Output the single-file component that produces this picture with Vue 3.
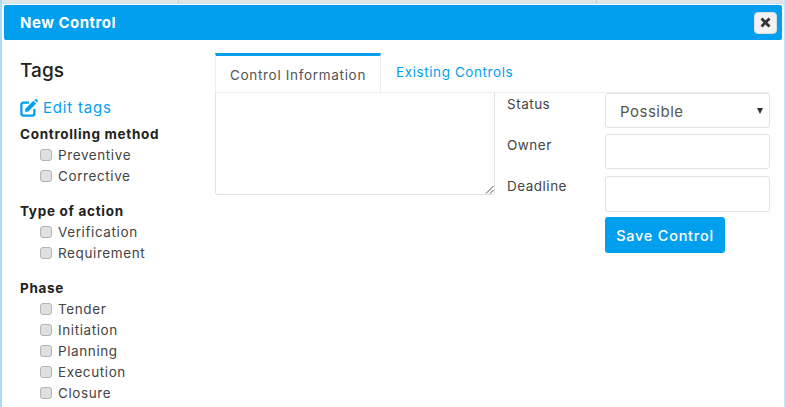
<script setup>
const groups = [
  { title: "Controlling method", items: ["Preventive", "Corrective"] },
  { title: "Type of action", items: ["Verification", "Requirement"] },
  { title: "Phase", items: ["Tender", "Initiation", "Planning", "Execution", "Closure"] },
];
</script>

<template>
  <div class="modal">
    <header class="modal_header">
      <h4>New Control</h4>
      <button class="close_btn">
        <svg width="11" height="11" viewBox="0 0 11 11"><path d="M1.5 1.5l8 8M9.5 1.5l-8 8" stroke="#333" stroke-width="2.8" /></svg>
      </button>
    </header>

    <div class="modal_body">
      <aside class="tags">
        <h3>Tags</h3>
        <a class="edit_link">
          <svg width="18" height="18" viewBox="0 0 18 18" fill="none">
            <path d="M9 3.6H3.4A2 2 0 0 0 1.4 5.6v9a2 2 0 0 0 2 2h9a2 2 0 0 0 2-2V10" stroke="#039fef" stroke-width="2.3" />
            <path d="M5.6 9.6 13.4 1.8l2.8 2.8-7.8 7.8-3.4.6z" fill="#039fef" />
            <path d="M14.4 1 15.2.3a1 1 0 0 1 1.4 0l1.1 1.1a1 1 0 0 1 0 1.4l-.8.8z" fill="#039fef" />
          </svg>
          Edit tags
        </a>
        <div v-for="group in groups" :key="group.title" class="group">
          <div class="group_title">{{ group.title }}</div>
          <label v-for="item in group.items" :key="item" class="check_row">
            <span class="check"></span>{{ item }}
          </label>
        </div>
      </aside>

      <main class="content">
        <nav class="tabs">
          <div class="tab active">Control Information</div>
          <div class="tab">Existing Controls</div>
        </nav>
        <div class="panel">
          <div class="textarea">
            <svg class="grip" width="9" height="9" viewBox="0 0 9 9"><path d="M1 8.5 8.5 1M5 8.5 8.5 5" stroke="#555" stroke-width="1" /></svg>
          </div>
          <div class="form">
            <div class="field">
              <label>Status</label>
              <div class="input select">Possible<span class="caret"></span></div>
            </div>
            <div class="field owner">
              <label>Owner</label>
              <div class="input"></div>
            </div>
            <div class="field last">
              <label>Deadline</label>
              <div class="input"></div>
            </div>
            <button class="save_btn">Save Control</button>
          </div>
        </div>
      </main>
    </div>
  </div>
</template>

<style>
html, body {
  margin: 0;
  background: #fff;
  overflow: hidden;
}
</style>

<style scoped>
.modal {
  height: 407px;
  box-sizing: border-box;
  padding-top: 3px;
  overflow: hidden;
  background:
    linear-gradient(#c9c9c9, #c9c9c9) 176px 0 / 1px 3px no-repeat,
    linear-gradient(#c9c9c9, #c9c9c9) 594px 0 / 1px 3px no-repeat,
    linear-gradient(#e4e4e4 3px, #bfe6fb 3px, #bfe6fb 4px, #fff 4px);
  font-family: Inter, "Open Sans", sans-serif;
  color: #333;
  border-left: 2px solid #a9dcf8;
  border-right: 1px solid #bfe6fb;
}

.modal_header {
  display: flex;
  justify-content: space-between;
  align-items: center;
  height: 35px;
  margin: 2px 2px 0 2px;
  padding: 0 5px 0 16px;
  background: #039fef;
  border-radius: 2px;
}

h4 {
  margin: 0;
  font-size: 15px;
  font-weight: 700;
  letter-spacing: .5px;
  color: #fff;
}

.close_btn {
  display: flex;
  align-items: center;
  justify-content: center;
  width: 23px;
  height: 22px;
  padding: 0;
  background: #f2f2f2;
  border: 1px solid #ddd;
  border-radius: 4px;
}

.modal_body {
  display: flex;
  padding-top: 13px;
}

.tags {
  width: 195px;
  padding-left: 18px;
  flex-shrink: 0;
}

h3 {
  margin: 6px 0 15px;
  font-size: 19px;
  line-height: 24px;
  font-weight: 500;
  letter-spacing: .1px;
  color: #222;
}

.edit_link {
  display: flex;
  align-items: center;
  gap: 5px;
  font-size: 15px;
  line-height: 20px;
  letter-spacing: .8px;
  color: #039fef;
}

.group {
  margin-bottom: 15px;
}

.edit_link + .group {
  margin-top: 6px;
}

.group_title {
  font-size: 13.5px;
  line-height: 20px;
  font-weight: 700;
  letter-spacing: .7px;
  color: #222;
}

.check_row {
  display: flex;
  align-items: center;
  height: 21px;
  padding-left: 20px;
  font-size: 13.5px;
  letter-spacing: .6px;
  color: #444;
}

.check {
  width: 10px;
  height: 10px;
  margin-right: 6px;
  background: #e0e0e0;
  border: 1px solid #b4b4b4;
  border-radius: 3px;
}

.content {
  width: 555px;
}

.tabs {
  display: flex;
  height: 39px;
  border-bottom: 1px solid #eee;
}

.tab {
  padding: 0 15px;
  font-size: 13.5px;
  line-height: 38px;
  letter-spacing: .58px;
  color: #039fef;
}

.tab.active {
  padding: 0 14px;
  letter-spacing: .68px;
  color: #555;
  border-top: 3px solid #039fef;
  border-right: 1px solid #eee;
  border-left: 1px solid #eee;
}

.panel {
  display: flex;
}

.textarea {
  position: relative;
  box-sizing: border-box;
  width: 280px;
  height: 102px;
  background: #fff;
  border: 1px solid #dfe3e8;
  border-top: 0;
  border-radius: 0 0 3px 3px;
}

.grip {
  position: absolute;
  right: 0;
  bottom: 0;
}

.form {
  width: 263px;
  margin-left: 12px;
}

.field {
  display: flex;
  margin-bottom: 6px;
}

.field.owner {
  margin-bottom: 7px;
}

.field.last {
  margin-bottom: 5px;
}

.field.last label {
  padding-top: 2px;
}

.field.last .input {
  height: 36px;
}

.field label {
  width: 98px;
  padding-top: 3px;
  font-size: 13.5px;
  letter-spacing: .5px;
  color: #444;
}

.input {
  position: relative;
  box-sizing: border-box;
  width: 165px;
  height: 35px;
  border: 1px solid #dfe3e8;
  border-radius: 3px;
}

.select {
  padding-left: 14px;
  font-size: 15px;
  line-height: 35px;
  letter-spacing: .5px;
  color: #555;
}

.caret {
  position: absolute;
  top: 14px;
  right: 6px;
  border-top: 6px solid #333;
  border-right: 3px solid transparent;
  border-left: 3px solid transparent;
}

.save_btn {
  display: block;
  width: 120px;
  height: 36px;
  margin: 0 0 0 98px;
  padding: 0;
  font: 500 14.5px Inter, "Open Sans", sans-serif;
  letter-spacing: .75px;
  color: #fff;
  background: #039fef;
  border: 0;
  border-radius: 3px;
}
</style>
